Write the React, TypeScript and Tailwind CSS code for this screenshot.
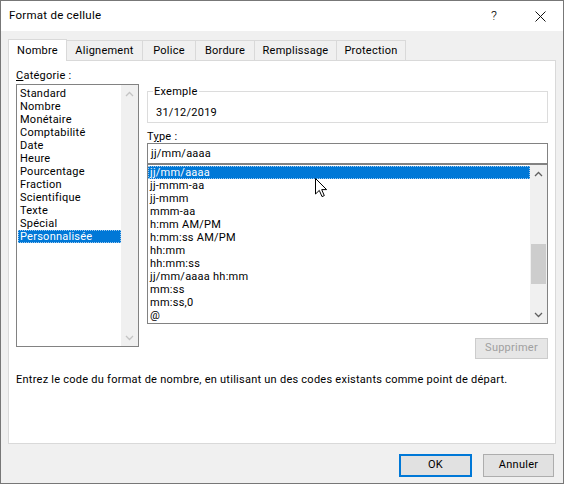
import React from 'react';

const categories = [
    'Standard',
    'Nombre',
    'Monétaire',
    'Comptabilité',
    'Date',
    'Heure',
    'Pourcentage',
    'Fraction',
    'Scientifique',
    'Texte',
    'Spécial',
    'Personnalisée',
];

const types = [
    'jj/mm/aaaa',
    'jj-mmm-aa',
    'jj-mmm',
    'mmm-aa',
    'h:mm AM/PM',
    'h:mm:ss AM/PM',
    'hh:mm',
    'hh:mm:ss',
    'jj/mm/aaaa hh:mm',
    'mm:ss',
    'mm:ss,0',
    '@',
];

// tab widths measured on the reference
const tabs = [
    { label: 'Nombre', w: 'w-[59px]' },
    { label: 'Alignement', w: 'w-[76px]' },
    { label: 'Police', w: 'w-[53px]' },
    { label: 'Bordure', w: 'w-[59px]' },
    { label: 'Remplissage', w: 'w-[82px]' },
    { label: 'Protection', w: 'w-[69px]' },
];

function Chevron({ up, color }: { up?: boolean; color: string }) {
    return (
        <svg width="9" height="6" viewBox="0 0 9 6">
            <path
                d={up ? 'M1 5 L4.5 1.5 L8 5' : 'M1 1 L4.5 4.5 L8 1'}
                fill="none"
                stroke={color}
                strokeWidth="1.3"
            />
        </svg>
    );
}

function ScrollBar({ disabled }: { disabled?: boolean }) {
    const color = disabled ? '#c4c4c4' : '#606060';
    return (
        <div className="w-[17px] h-full bg-[#f0f0f0] flex flex-col">
            <div className="h-[17px] flex items-center justify-center">
                <Chevron up color={color} />
            </div>
            <div className="flex-1">
                {!disabled && <div className="mt-[62px] mx-auto w-[15px] h-[40px] bg-[#cdcdcd]" />}
            </div>
            <div className="h-[17px] flex items-center justify-center">
                <Chevron color={color} />
            </div>
        </div>
    );
}

function Cursor() {
    return (
        <svg className="absolute left-[167px] top-[13px]" width="13" height="20" viewBox="0 0 13 20">
            <path
                d="M0.5 0.5 L0.5 16 L4.3 12.4 L7 18.6 L9.3 17.6 L6.7 11.6 L11.6 11.6 Z"
                fill="#ffffff"
                stroke="#000000"
                strokeWidth="1"
                strokeLinejoin="miter"
            />
        </svg>
    );
}

export default function App() {
    return (
        <div className="w-[564px] h-[484px] border border-[#777777] bg-[#f0f0f0] flex flex-col text-black text-[11px] tracking-[0.25px] font-['Roboto',sans-serif]">
            {/* Title bar */}
            <div className="h-[30px] bg-white flex items-center shrink-0">
                <span className="pl-[8px] text-[11.5px]">Format de cellule</span>
                <div className="ml-auto flex h-full">
                    <div className="w-[46px] h-full flex items-center justify-center text-[13px] font-light">?</div>
                    <div className="w-[46px] h-full flex items-center justify-center">
                        <svg width="11" height="11" viewBox="0 0 11 11">
                            <path d="M0.5 0.5 L10.5 10.5 M10.5 0.5 L0.5 10.5" stroke="#111" strokeWidth="1" />
                        </svg>
                    </div>
                </div>
            </div>

            {/* Tabs */}
            <div className="pt-[7px] pl-[7px] flex items-end h-[29px] shrink-0">
                {tabs.map((t, i) =>
                    i === 0 ? (
                        <div
                            key={t.label}
                            className={`${t.w} h-[22px] bg-white border border-b-0 border-[#d9d9d9] flex items-center justify-center relative z-10 -mb-px pt-[1px]`}
                        >
                            {t.label}
                        </div>
                    ) : (
                        <div
                            key={t.label}
                            className={`${t.w} h-[20px] bg-[#f0f0f0] border border-l-0 border-b-0 border-[#d9d9d9] flex items-center justify-center pt-[2px]`}
                        >
                            {t.label}
                        </div>
                    )
                )}
            </div>

            {/* Tab panel */}
            <div className="ml-[7px] w-[548px] h-[384px] bg-white border border-[#d9d9d9] pt-[8px] pl-[7px] shrink-0">
                <div className="flex">
                    {/* Category column */}
                    <div className="w-[123px]">
                        <div className="h-[13px] leading-[13px]">
                            <span className="underline">C</span>atégorie :
                        </div>
                        <div className="mt-[2px] h-[263px] border border-[#828282] flex">
                            <div className="flex-1 pt-[2px] pl-[1px]">
                                {categories.map((c, i) => (
                                    <div
                                        key={c}
                                        className={
                                            i === categories.length - 1
                                                ? 'h-[13px] leading-[11px] pl-[1px] bg-[#0078d7] text-white border border-dotted border-[#9cc8ee]'
                                                : 'h-[13px] leading-[13px] pl-[2px]'
                                        }
                                    >
                                        {c}
                                    </div>
                                ))}
                            </div>
                            <ScrollBar disabled />
                        </div>
                    </div>

                    {/* Type column */}
                    <div className="ml-[8px] w-[401px] flex flex-col">
                        <fieldset className="mt-[16px] border border-[#dcdcdc] pb-[3px]">
                            <legend className="ml-[5px] px-[1px] leading-[13px]">Exemple</legend>
                            <div className="pt-[8px] pl-[8px] leading-[13px]">31/12/2019</div>
                        </fieldset>
                        <div className="mt-[7px] h-[13px] leading-[13px]">
                            T<span className="underline">y</span>pe :
                        </div>
                        <div className="h-[21px] border border-[#828282] pl-[3px] pt-[1px] flex items-center">jj/mm/aaaa</div>
                        <div className="h-[160px] border border-[#828282] flex relative">
                            <div className="flex-1 pt-[1px]">
                                {types.map((t, i) => (
                                    <div
                                        key={t}
                                        className={
                                            i === 0
                                                ? 'h-[13px] leading-[11px] pl-[1px] bg-[#0078d7] text-white border border-dotted border-[#9cc8ee]'
                                                : 'h-[13px] leading-[13px] pl-[2px]'
                                        }
                                    >
                                        {t}
                                    </div>
                                ))}
                            </div>
                            <ScrollBar />
                            <Cursor />
                        </div>
                        <div className="mt-[14px] self-end w-[73px] h-[21px] bg-[#e6e6e6] border border-[#cccccc] text-[#a0a0a0] flex items-center justify-center">
                            Supprimer
                        </div>
                    </div>
                </div>
                <div className="mt-[14px] leading-[13px]">
                    Entrez le code du format de nombre, en utilisant un des codes existants comme point de départ.
                </div>
            </div>

            {/* Buttons */}
            <div className="mt-[10px] flex justify-end gap-[11px] pr-[9px]">
                <div className="w-[73px] h-[23px] bg-[#e1e1e1] border-2 border-[#0078d7] flex items-center justify-center">
                    OK
                </div>
                <div className="w-[71px] h-[23px] bg-[#e1e1e1] border border-[#adadad] flex items-center justify-center">
                    Annuler
                </div>
            </div>
        </div>
    );
}
